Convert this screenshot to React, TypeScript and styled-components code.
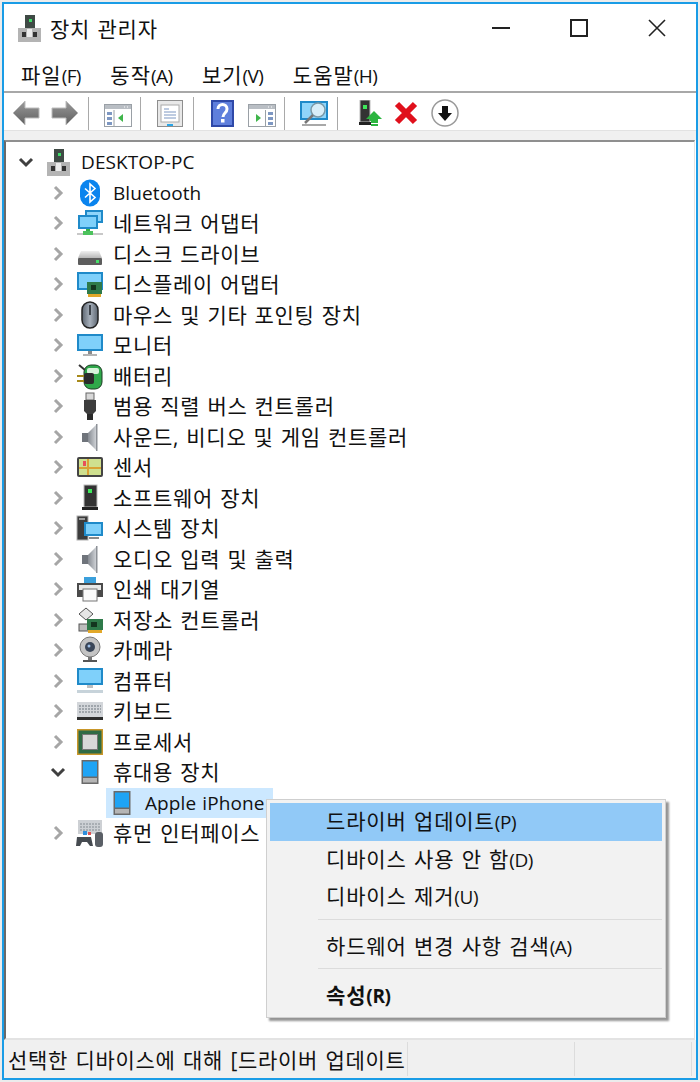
import React from "react";
import styled, { createGlobalStyle } from "styled-components";

const GlobalStyle = createGlobalStyle`
  html, body {
    margin: 0;
    padding: 0;
    background: #ececec;
  }
  #root {
    width: 700px;
    height: 1082px;
    overflow: hidden;
    padding-top: 2px;
    box-sizing: border-box;
  }
`;

const FONT = `"Open Sans", "Noto Sans CJK KR", sans-serif`;

const Window = styled.div`
  position: relative;
  box-sizing: border-box;
  width: 696px;
  height: 1078px;
  margin-left: 2px;
  border: 2px solid #1a9ce6;
  background: #ffffff;
  display: flex;
  flex-direction: column;
  font-family: ${FONT};
  color: #111111;
`;

const TitleBar = styled.div`
  height: 48px;
  display: flex;
  align-items: center;
  padding-left: 14px;
`;

const TitleText = styled.div`
  margin-left: 9px;
  font-size: 21px;
  letter-spacing: 0.8px;
  word-spacing: 1px;
  flex: 1;
`;

const WinButton = styled.div`
  width: 78px;
  height: 46px;
  display: flex;
  align-items: center;
  justify-content: center;
`;

const MenuBar = styled.div`
  height: 35px;
  padding: 4px 0 0 17px;
  display: flex;
  align-items: center;
  gap: 29.5px;
  border-bottom: 2px solid #a8a8a8;
`;

const MenuItem = styled.div`
  font-size: 21px;
  letter-spacing: 1px;
  & small {
    font-size: 19px;
    letter-spacing: -0.6px;
  }
`;

const ToolBar = styled.div`
  height: 37px;
  display: flex;
  align-items: flex-end;
  padding-left: 2.5px;
  border-bottom: 1px solid #e2e2e2;
`;

const ToolButton = styled.div<{ $w?: number }>`
  width: ${(p) => p.$w ?? 39}px;
  height: 34px;
  display: flex;
  align-items: center;
  justify-content: center;
`;

const ToolSep = styled.div<{ $w?: number }>`
  width: ${(p) => p.$w ?? 13.5}px;
  height: 33px;
  padding-left: 3px;
  box-sizing: border-box;
  &::before {
    content: "";
    display: block;
    width: 1px;
    height: 100%;
    background: #a9a9a9;
  }
`;

const Strip = styled.div`
  height: 9px;
  background: #f0f0f0;
`;

const TreePanel = styled.div`
  flex: 1;
  min-height: 0;
  margin-right: 1px;
  padding-top: 5px;
  border-left: 2px solid #696969;
  border-top: 2px solid #8f8f8f;
  border-right: 1px solid #e3e3e3;
  border-bottom: 2px solid #e3e3e3;
`;

const Row = styled.div<{ $depth: number }>`
  height: 30.5px;
  display: flex;
  align-items: center;
  padding-left: ${(p) => 4 + p.$depth * 32}px;
`;

const Expander = styled.div`
  width: 32px;
  height: 20px;
  display: flex;
  align-items: center;
  justify-content: center;
  flex-shrink: 0;
`;

const NodeBody = styled.div<{ $selected?: boolean }>`
  height: 30px;
  display: flex;
  align-items: center;
  padding-right: 8px;
  background: ${(p) => (p.$selected ? "#cce8ff" : "transparent")};
`;

const NodeIcon = styled.div`
  width: 32px;
  height: 30px;
  display: flex;
  align-items: center;
  justify-content: center;
  flex-shrink: 0;
`;

const NodeLabel = styled.div<{ $latin?: boolean }>`
  margin-left: 7px;
  font-size: ${(p) => (p.$latin ? 19 : 21)}px;
  line-height: 30px;
  letter-spacing: ${(p) => (p.$latin ? 0.1 : 0.7)}px;
  word-spacing: 1px;
  white-space: nowrap;
`;

const StatusBar = styled.div`
  height: 38px;
  background: #f0f0f0;
  display: flex;
  align-items: center;
`;

const StatusCell = styled.div<{ $w: number }>`
  width: ${(p) => p.$w}px;
  height: 34px;
  box-sizing: border-box;
  border-right: 1px solid #dcdcdc;
  padding-left: 4px;
  font-size: 21px;
  line-height: 36px;
  letter-spacing: 0.65px;
  word-spacing: 1.5px;
  white-space: nowrap;
  overflow: hidden;
`;

const ContextMenu = styled.div`
  position: absolute;
  left: 262px;
  top: 795px;
  box-sizing: border-box;
  width: 400px;
  height: 219px;
  padding: 3px;
  background: #f2f2f2;
  border: 1px solid #cfcfcf;
  box-shadow: 3px 3px 2px rgba(0, 0, 0, 0.42);
`;

const ContextItem = styled.div<{ $active?: boolean; $bold?: boolean }>`
  height: 37.5px;
  line-height: 37px;
  padding-left: 56px;
  font-size: 21px;
  letter-spacing: 0.85px;
  word-spacing: 1px;
  font-weight: ${(p) => (p.$bold ? 700 : 400)};
  background: ${(p) => (p.$active ? "#91c9f7" : "transparent")};
  & small {
    font-size: 19px;
    letter-spacing: -0.4px;
  }
`;

const ContextSep = styled.div`
  height: 1px;
  margin: 3px 0 8px 48px;
  background: #dcdcdc;
`;

// small device icons, drawn on a 28x28 grid
const Ico = ({ children, s = 28 }: { children: React.ReactNode; s?: number }) => (
  <svg width={s} height={s} viewBox="0 0 28 28">
    {children}
  </svg>
);

const Screen = ({ x = 1, y = 4, w = 26, h = 17 }: { x?: number; y?: number; w?: number; h?: number }) => (
  <>
    <rect x={x} y={y} width={w} height={h} fill="#1f8ac9" />
    <rect x={x + 2} y={y + 2} width={w - 4} height={h - 4} fill="#7fd0fa" />
  </>
);

const Chevron = ({ open }: { open?: boolean }) =>
  open ? (
    <svg width="16" height="12" viewBox="0 0 16 12">
      <path d="M2 3l6 6 6-6" fill="none" stroke="#404040" strokeWidth="3" />
    </svg>
  ) : (
    <svg width="12" height="16" viewBox="0 0 12 16">
      <path d="M3 2l6 6-6 6" fill="none" stroke="#a6a6a6" strokeWidth="3" />
    </svg>
  );

const PcIcon = () => (
  <svg width="23" height="27" viewBox="0 0 23 27">
    <rect x="7" y="0" width="10" height="14" fill="#3f4a45" />
    <rect x="11" y="4" width="3" height="3" fill="#3fdc6a" />
    <rect x="0" y="13" width="23" height="14" fill="#b4b4b4" />
    <rect x="4" y="17" width="4" height="5" fill="#333" />
    <rect x="15" y="17" width="4" height="5" fill="#333" />
    <rect x="9" y="14" width="5" height="8" fill="#ececec" />
  </svg>
);

const BluetoothIcon = () => (
  <Ico>
    <rect x="4" y="0.500" width="20" height="27" rx="10" fill="#0a84ee" />
    <path d="M9 9.500l10 9-5 4.500V5l5 4.500-10 9" fill="none" stroke="#fff" strokeWidth="1.600" />
  </Ico>
);

const NetworkIcon = () => (
  <Ico>
    <rect x="9" y="1" width="18" height="13" fill="#1f8ac9" />
    <rect x="11" y="3" width="14" height="9" fill="#8fd5fa" />
    <rect x="2" y="6" width="20" height="14" fill="#1f8ac9" />
    <rect x="4" y="8" width="16" height="10" fill="#7fd0fa" />
    <rect x="10" y="20" width="4" height="3" fill="#37b24a" />
    <rect x="1" y="24" width="26" height="2" fill="#c8c8c8" />
    <rect x="7" y="22" width="10" height="4" fill="#4cc25c" />
  </Ico>
);

const DiskIcon = () => (
  <Ico>
    <defs>
      <linearGradient id="diskTop" x1="0" y1="0" x2="0" y2="1">
        <stop offset="0" stopColor="#f0f0f0" />
        <stop offset="1" stopColor="#b8b8b8" />
      </linearGradient>
    </defs>
    <path d="M5 11h18l3 7H2z" fill="url(#diskTop)" />
    <rect x="2" y="18" width="24" height="7" rx="1" fill="#5d5d5d" />
    <rect x="20" y="20" width="3" height="3" fill="#46e06a" />
  </Ico>
);

const DisplayAdapterIcon = () => (
  <Ico>
    <Screen y={2} h={18} />
    <rect x="11" y="12" width="15" height="12" fill="#2f7a4a" />
    <rect x="15" y="15" width="5" height="5" fill="#14351f" />
    <rect x="12" y="24" width="13" height="3" fill="#e2a82a" />
  </Ico>
);

const MouseIcon = () => (
  <Ico>
    <defs>
      <linearGradient id="mouseBody" x1="0" y1="0" x2="1" y2="0">
        <stop offset="0" stopColor="#5c6570" />
        <stop offset="0.500" stopColor="#a7b0bb" />
        <stop offset="1" stopColor="#5c6570" />
      </linearGradient>
    </defs>
    <rect x="6" y="1" width="16" height="26" rx="8" fill="url(#mouseBody)" stroke="#222" strokeWidth="1.500" />
    <rect x="13" y="4" width="2" height="10" fill="#3c4249" />
  </Ico>
);

const MonitorIcon = () => (
  <Ico>
    <Screen y={3} h={17} />
    <rect x="12" y="20" width="4" height="3" fill="#8a8a8a" />
    <rect x="7" y="23" width="14" height="2" fill="#b4b4b4" />
  </Ico>
);

const BatteryIcon = () => (
  <Ico>
    <rect x="8" y="3" width="18" height="24" rx="7" fill="#2fa84a" stroke="#1f3b26" />
    <rect x="11" y="6" width="12" height="6" rx="2" fill="#d7f3da" />
    <rect x="1" y="13" width="8" height="2" fill="#a88a1a" />
    <rect x="1" y="18" width="8" height="2" fill="#a88a1a" />
    <rect x="8" y="11" width="10" height="11" rx="2" fill="#2b2b2b" />
    <path d="M3 3l6 5" stroke="#333" strokeWidth="2" />
  </Ico>
);

const UsbIcon = () => (
  <Ico>
    <rect x="10" y="1" width="8" height="7" fill="#d8d8d8" stroke="#666" />
    <path d="M8 8h12v11l-3 3h-6l-3-3z" fill="#3d3d3d" />
    <rect x="11" y="22" width="6" height="6" fill="#2a2a2a" />
  </Ico>
);

const SpeakerIcon = ({ id }: { id: string }) => (
  <Ico>
    <defs>
      <linearGradient id={id} x1="0" y1="0" x2="1" y2="0">
        <stop offset="0" stopColor="#868b92" />
        <stop offset="1" stopColor="#d6d9dd" />
      </linearGradient>
    </defs>
    <rect x="6" y="10" width="6" height="9" fill="#6f747b" />
    <path d="M12 10l9-9v27l-9-9z" fill={`url(#${id})`} />
    <rect x="20" y="1" width="1.500" height="27" fill="#8c9096" />
  </Ico>
);

const SensorIcon = () => (
  <Ico>
    <rect x="1" y="4" width="26" height="20" rx="2" fill="#444" />
    <rect x="3" y="6" width="22" height="16" fill="#cfe08f" />
    <path d="M3 15h22M12 6v16" stroke="#d9a235" strokeWidth="2" />
    <rect x="7" y="8" width="3" height="5" fill="#e8505a" />
  </Ico>
);

const SoftwareIcon = () => (
  <Ico>
    <rect x="8" y="1" width="13" height="22" fill="#333" stroke="#bbb" />
    <rect x="12" y="5" width="4" height="4" fill="#3ee85a" />
    <rect x="6" y="23" width="16" height="3" fill="#222" />
  </Ico>
);

const SystemIcon = () => (
  <Ico>
    <rect x="1" y="2" width="11" height="24" fill="#3c3c3c" stroke="#b0b0b0" />
    <rect x="3" y="4" width="6" height="2" fill="#9c9c9c" />
    <Screen x={8} y={8} w={19} h={14} />
    <rect x="13" y="23" width="10" height="2" fill="#8a8a8a" />
  </Ico>
);

const PrinterIcon = () => (
  <Ico>
    <rect x="8" y="2" width="12" height="8" fill="#3ba0dc" />
    <rect x="1" y="8" width="26" height="14" fill="#4a4a4a" />
    <rect x="3" y="10" width="22" height="5" fill="#e8e8e8" />
    <rect x="7" y="14" width="14" height="12" fill="#fafafa" stroke="#777" />
  </Ico>
);

const StorageIcon = () => (
  <Ico>
    <path d="M3 8l7-6 7 6-7 6z" fill="#e6e6e6" stroke="#555" />
    <rect x="3" y="18" width="16" height="7" fill="#bdbdbd" stroke="#555" />
    <rect x="11" y="13" width="16" height="11" fill="#2f7a4a" />
    <rect x="15" y="16" width="6" height="5" fill="#14351f" />
    <rect x="12" y="24" width="14" height="3" fill="#e2a82a" />
  </Ico>
);

const CameraIcon = () => (
  <Ico>
    <circle cx="14" cy="11" r="10" fill="#c4c4c4" stroke="#777" />
    <circle cx="14" cy="11" r="5" fill="#3a4658" />
    <circle cx="13" cy="10" r="1.500" fill="#9fc0e8" />
    <rect x="12" y="21" width="4" height="3" fill="#777" />
    <rect x="7" y="24" width="14" height="2" fill="#555" />
  </Ico>
);

const ComputerIcon = () => (
  <Ico>
    <Screen y={1} h={17} />
    <rect x="11" y="18" width="6" height="3" fill="#c0c0c0" />
    <rect x="1" y="23" width="26" height="3" fill="#c7d3da" />
  </Ico>
);

const KeyboardIcon = () => (
  <Ico>
    <rect x="1" y="5" width="26" height="15" fill="#d3d6da" />
    <path d="M3 9h22M3 12h22M3 15h22" stroke="#8f959c" strokeWidth="1.400" strokeDasharray="2 1" />
    <rect x="1" y="20" width="26" height="3" fill="#2e2e2e" />
  </Ico>
);

const ProcessorIcon = () => (
  <Ico>
    <rect x="1" y="1" width="26" height="26" fill="#c9972a" />
    <rect x="2.500" y="2.500" width="23" height="23" fill="#2f6b45" />
    <rect x="6.500" y="6.500" width="15" height="15" fill="#d8d8d8" stroke="#777" />
  </Ico>
);

const PhoneIcon = () => (
  <Ico>
    <rect x="5.500" y="2" width="17" height="24" fill="#6a6a6a" />
    <rect x="7" y="3.500" width="14" height="15" fill="#1fa4f5" />
    <rect x="7" y="20" width="14" height="4.500" fill="#b5b5b5" />
  </Ico>
);

const HidIcon = () => (
  <Ico>
    <rect x="2" y="1" width="24" height="14" fill="#cdd0d4" />
    <path d="M4 5h20M4 8h20M4 11h20" stroke="#858b92" strokeWidth="1.200" strokeDasharray="2 1" />
    <path d="M1 18h14l2 9h-3l-3-4H6l-2 4H0z" fill="#454a50" />
    <rect x="7" y="12" width="4" height="4" fill="#2f8fdc" />
    <rect x="12" y="13" width="3" height="3" fill="#e05050" />
    <rect x="19" y="13" width="8" height="15" rx="3" fill="#5a5f66" />
  </Ico>
);

const ToolArrow = ({ dir }: { dir: "back" | "forward" }) => (
  <svg width="28" height="26" viewBox="0 0 28 26">
    <defs>
      <linearGradient id={`arrow-${dir}`} x1="0" y1="0" x2="0" y2="1">
        <stop offset="0" stopColor="#9a9a9a" />
        <stop offset="1" stopColor="#5f5f5f" />
      </linearGradient>
    </defs>
    <path
      d={dir === "back" ? "M1 13L13 1v7h14v10H13v7z" : "M27 13L15 1v7H1v10h14v7z"}
      fill={`url(#arrow-${dir})`}
      stroke="#bcbcbc"
    />
  </svg>
);

// pane icon: the list column and the green arrow swap sides between the two
const WindowPane = ({ arrow }: { arrow: "left" | "right" }) => {
  const listX = arrow === "left" ? 3 : 20;
  return (
    <svg width="28" height="27" viewBox="0 -5 28 27">
      <rect x="0.500" y="-0.500" width="27" height="22" fill="#fff" stroke="#9aa0a6" />
      <rect x="1" y="0" width="26" height="4" fill="#b9bec4" />
      <path d="M20 2h1M23 2h1" stroke="#fff" />
      <rect x={listX} y="7" width="5" height="3" fill="#7d97c2" />
      <rect x={listX} y="12" width="5" height="3" fill="#7d97c2" />
      <rect x={listX} y="17" width="5" height="3" fill="#7d97c2" />
      <path d={arrow === "left" ? "M10 5v16" : "M17.500 5v16"} stroke="#9aa0a6" />
      <path d={arrow === "left" ? "M19 9v8l-5-4z" : "M8 9v8l5-4z"} fill="#3fb54a" />
    </svg>
  );
};

const tree = [
  { icon: <BluetoothIcon />, label: "Bluetooth", latin: true },
  { icon: <NetworkIcon />, label: "네트워크 어댑터" },
  { icon: <DiskIcon />, label: "디스크 드라이브" },
  { icon: <DisplayAdapterIcon />, label: "디스플레이 어댑터" },
  { icon: <MouseIcon />, label: "마우스 및 기타 포인팅 장치" },
  { icon: <MonitorIcon />, label: "모니터" },
  { icon: <BatteryIcon />, label: "배터리" },
  { icon: <UsbIcon />, label: "범용 직렬 버스 컨트롤러" },
  { icon: <SpeakerIcon id="spk1" />, label: "사운드, 비디오 및 게임 컨트롤러" },
  { icon: <SensorIcon />, label: "센서" },
  { icon: <SoftwareIcon />, label: "소프트웨어 장치" },
  { icon: <SystemIcon />, label: "시스템 장치" },
  { icon: <SpeakerIcon id="spk2" />, label: "오디오 입력 및 출력" },
  { icon: <PrinterIcon />, label: "인쇄 대기열" },
  { icon: <StorageIcon />, label: "저장소 컨트롤러" },
  { icon: <CameraIcon />, label: "카메라" },
  { icon: <ComputerIcon />, label: "컴퓨터" },
  { icon: <KeyboardIcon />, label: "키보드" },
  { icon: <ProcessorIcon />, label: "프로세서" },
];

const App = () => {
  return (
    <>
      <GlobalStyle />
      <Window>
        <TitleBar>
          <PcIcon />
          <TitleText>장치 관리자</TitleText>
          <WinButton>
            <svg width="18" height="2"><rect width="18" height="2" fill="#222" /></svg>
          </WinButton>
          <WinButton>
            <svg width="18" height="18"><rect x="1" y="1" width="16" height="16" fill="none" stroke="#222" strokeWidth="2" /></svg>
          </WinButton>
          <WinButton>
            <svg width="18" height="18"><path d="M1 1l16 16M17 1L1 17" stroke="#222" strokeWidth="1.600" /></svg>
          </WinButton>
        </TitleBar>
        <MenuBar>
          <MenuItem>파일<small>(F)</small></MenuItem>
          <MenuItem>동작<small>(A)</small></MenuItem>
          <MenuItem>보기<small>(V)</small></MenuItem>
          <MenuItem>도움말<small>(H)</small></MenuItem>
        </MenuBar>
        <ToolBar>
          <ToolButton><ToolArrow dir="back" /></ToolButton>
          <ToolButton><ToolArrow dir="forward" /></ToolButton>
          <ToolSep />
          <ToolButton><WindowPane arrow="left" /></ToolButton>
          <ToolSep />
          <ToolButton>
            <svg width="26" height="27" viewBox="0 0 26 27">
              <rect x="0.500" y="0.500" width="25" height="26" fill="#e8e8e8" stroke="#8e8e8e" />
              <rect x="4" y="5" width="18" height="17" fill="#fff" stroke="#aaa" />
              <path d="M7 9h5M7 12h12M7 15h12M7 18h12" stroke="#7d97c2" />
              <rect x="10" y="24" width="6" height="2" fill="#2aa6e8" />
            </svg>
          </ToolButton>
          <ToolSep />
          <ToolButton>
            <svg width="23" height="27" viewBox="0 0 23 27">
              <rect width="23" height="27" fill="#2f49a8" />
              <rect x="2" y="2" width="19" height="23" fill="#5f7fdc" />
              <path d="M7 9c0-6 9-6 9 0 0 4-4 4-4 8" fill="none" stroke="#fff" strokeWidth="3" />
              <rect x="10" y="19" width="3.500" height="3.500" fill="#fff" />
            </svg>
          </ToolButton>
          <ToolButton><WindowPane arrow="right" /></ToolButton>
          <ToolSep />
          <ToolButton>
            <svg width="28" height="27" viewBox="0 0 28 27">
              <rect x="0" y="1" width="28" height="19" fill="#1f8ac9" />
              <rect x="2" y="3" width="24" height="15" fill="#8fd5fa" />
              <circle cx="18" cy="10" r="7" fill="#d8eef8" stroke="#7a9aa8" strokeWidth="1.500" />
              <path d="M13 15l-8 8" stroke="#777" strokeWidth="2.500" />
              <rect x="2" y="24" width="24" height="2" fill="#a8a8a8" />
            </svg>
          </ToolButton>
          <ToolSep $w={16.5} />
          <ToolButton>
            <svg width="24" height="27" viewBox="0 0 24 27">
              <rect x="2" y="0" width="10" height="22" fill="#333" stroke="#bbb" />
              <rect x="5" y="5" width="4" height="4" fill="#3ee85a" />
              <rect x="1" y="22" width="12" height="3" fill="#222" />
              <path d="M16 11l8 8h-4v2h-8v-2H8z" fill="#2bb53f" />
              <path d="M13 22h7M13 25h7" stroke="#2bb53f" strokeWidth="2" />
            </svg>
          </ToolButton>
          <ToolButton $w={34}>
            <svg width="24" height="24" viewBox="0 0 24 24"><path d="M3 3l18 18M21 3L3 21" stroke="#e0101c" strokeWidth="6" /></svg>
          </ToolButton>
          <ToolButton $w={43}>
            <svg width="28" height="28" viewBox="0 0 28 28">
              <circle cx="14" cy="14" r="13" fill="#fff" stroke="#9a9a9a" strokeWidth="1.500" />
              <path d="M11 7h6v7h4l-7 8-7-8h4z" fill="#111" />
            </svg>
          </ToolButton>
        </ToolBar>
        <Strip />
        <TreePanel>
          <Row $depth={0}>
            <Expander><Chevron open /></Expander>
            <NodeBody>
              <NodeIcon><PcIcon /></NodeIcon>
              <NodeLabel $latin>DESKTOP-PC</NodeLabel>
            </NodeBody>
          </Row>
          {tree.map((item) => (
            <Row $depth={1} key={item.label}>
              <Expander><Chevron /></Expander>
              <NodeBody>
                <NodeIcon>{item.icon}</NodeIcon>
                <NodeLabel $latin={item.latin}>{item.label}</NodeLabel>
              </NodeBody>
            </Row>
          ))}
          <Row $depth={1}>
            <Expander><Chevron open /></Expander>
            <NodeBody>
              <NodeIcon><PhoneIcon /></NodeIcon>
              <NodeLabel>휴대용 장치</NodeLabel>
            </NodeBody>
          </Row>
          <Row $depth={2}>
            <Expander />
            <NodeBody $selected>
              <NodeIcon><PhoneIcon /></NodeIcon>
              <NodeLabel $latin>Apple iPhone</NodeLabel>
            </NodeBody>
          </Row>
          <Row $depth={1}>
            <Expander><Chevron /></Expander>
            <NodeBody>
              <NodeIcon><HidIcon /></NodeIcon>
              <NodeLabel>휴먼 인터페이스 장치</NodeLabel>
            </NodeBody>
          </Row>
        </TreePanel>
        <StatusBar>
          <StatusCell $w={404}>선택한 디바이스에 대해 [드라이버 업데이트</StatusCell>
          <StatusCell $w={167} />
          <StatusCell $w={117} />
        </StatusBar>
        <ContextMenu>
          <ContextItem $active>드라이버 업데이트<small>(P)</small></ContextItem>
          <ContextItem>디바이스 사용 안 함<small>(D)</small></ContextItem>
          <ContextItem>디바이스 제거<small>(U)</small></ContextItem>
          <ContextSep />
          <ContextItem>하드웨어 변경 사항 검색<small>(A)</small></ContextItem>
          <ContextSep />
          <ContextItem $bold>속성<small>(R)</small></ContextItem>
        </ContextMenu>
      </Window>
    </>
  );
};

export default App;
